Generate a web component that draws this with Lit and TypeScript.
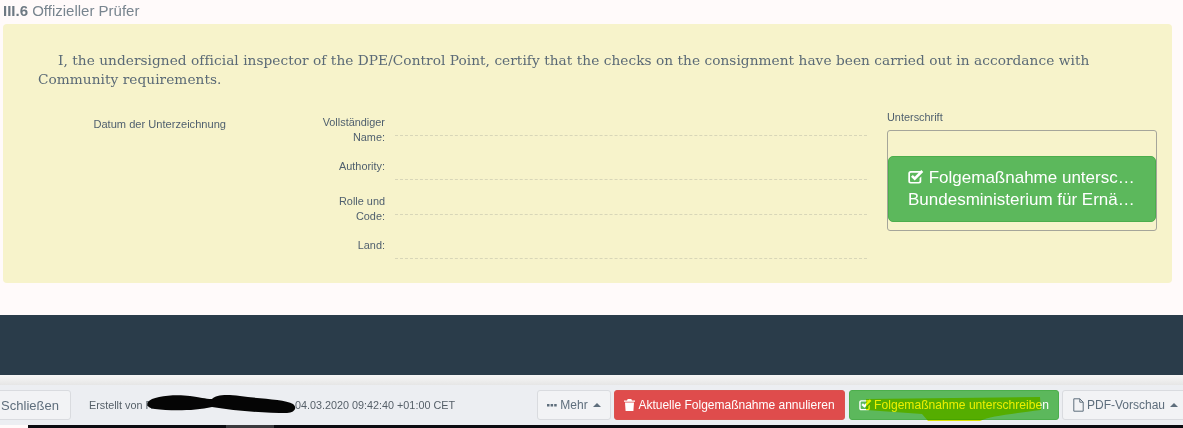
import { LitElement, html, css, svg } from "lit";
import { customElement } from "lit/decorators.js";

const check = svg`<svg class="ic" viewBox="0 0 16 14"><path d="M2.600 1h9.400c.6 0 1.100.1 1.500.3l-1.400 1.500H2.900c-.5 0-.9.4-.9.9v7.300c0 .5.4.9.9.9h7.800c.5 0 .9-.4.9-.9V8.300l1.700-1.700v4.700c0 1.300-1 2.300-2.300 2.300H2.600c-1.300 0-2.300-1-2.300-2.300V3.300C.3 2 1.300 1 2.600 1z" fill="currentColor"/><path d="M3.900 5.900l2.800 2.700L14.300 1" fill="none" stroke="currentColor" stroke-width="2.700"/></svg>`;

@customElement("app-root")
export class AppRoot extends LitElement {
  static styles = css`
    :host { display: block; position: relative; width: 1183px; height: 428px; overflow: hidden; background: #fffafa; font-family: "Liberation Sans", Arial, sans-serif; color: #5a6a78; }
    .title { height: 24px; padding: 3px 0 0 3px; box-sizing: border-box; font-size: 15px; line-height: 16px; color: #78858f; }
    .title b { color: #6d7983; }
    .panel { margin: 0 11px 0 3px; height: 259px; box-sizing: border-box; background: #f7f3cb; border-radius: 4px; padding: 27px 0 0 35px; }
    .cert { margin: 0; width: 1060px; font-family: "DejaVu Serif", Georgia, serif; font-size: 13.7px; line-height: 19px; color: #5b6a76; text-indent: 20px; letter-spacing: 0.05px; }
    .grid { display: flex; margin-top: 28px; font-size: 10.900px; color: #4f5f6e; }
    .date { flex: none; width: 188px; text-align: right; line-height: 14px; font-size: 11.100px; }
    .fields { flex: none; width: 545px; margin-left: 96px; margin-top: -2px; }
    .row { display: flex; height: 35px; align-items: flex-start; }
    .lab { width: 63px; text-align: right; line-height: 15px; }
    .val { flex: 0 0 472px; margin-left: 10px; border-bottom: 1px dashed #d8d6b8; box-sizing: border-box; }
    .name .val { height: 21px; }
    .auth .lab { padding-top: 9px; }
    .auth .val { height: 30px; }
    .role { margin-top: 7px; }
    .role .lab { padding-top: 2px; }
    .role .val { height: 23px; }
    .land .lab { padding-top: 11px; }
    .land .val { height: 32px; }
    .sig { flex: none; margin-left: 20px; width: 270px; margin-top: -7px; }
    .sig-l { line-height: 14px; height: 20px; }
    .box { border: 1px solid #a5a59a; border-radius: 3px; height: 101px; box-sizing: border-box; padding-top: 25px; }
    .sign { width: 268px; height: 66px; box-sizing: border-box; background: #5cb85c; border-radius: 5px; color: #fff; font-size: 17px; line-height: 22px; text-align: center; padding: 10px 19px 0; border: 1px solid #4cae4c; }
    .sign div { white-space: nowrap; overflow: hidden; text-overflow: ellipsis; }
    .sign .ic { width: 16px; height: 14px; vertical-align: -1px; }
    .band { margin-top: 32px; height: 60px; background: #2a3c4a; }
    .bar { height: 50px; box-sizing: border-box; padding-top: 10px; background: linear-gradient(#f6f6f6, #e6e6e6 10px, #eceef2 10px); }
    .tools { height: 40px; display: flex; align-items: center; font-size: 12px; }
    .btn { flex: none; height: 30px; box-sizing: border-box; border-radius: 3px; display: flex; align-items: center; justify-content: center; gap: 3px; font-size: 12px; white-space: nowrap; border: 1px solid #d9dbdf; background: #f2f3f5; color: #5e6e7c; }
    .close { width: 82px; margin-left: -11px; font-size: 13px; }
    .meta { flex: none; width: 466px; padding-left: 18px; box-sizing: border-box; font-size: 10.800px; color: #555f68; white-space: nowrap; display: flex; }
    .meta .by { width: 206px; }
    .more { width: 74px; }
    .danger { width: 231px; margin-left: 3px; background: #df4c4c; border-color: #d9534f; color: #fff; font-size: 12px; }
    .ok { width: 210px; margin-left: 4px; background: #5cb85c; border-color: #4cae4c; color: #fff; font-size: 12.100px; gap: 2px; }
    .ok .ic { width: 13px; height: 12px; }
    .pdf { width: 125px; margin-left: 3px; justify-content: flex-start; padding-left: 10px; }
    .caret { width: 0; height: 0; border: 4px solid transparent; border-top: 0; border-bottom: 4px solid #5e6e7c; margin-left: 2px; }
    .floor { height: 3px; margin-left: 28px; background: #0b0b10; display: flex; padding-left: 198px; }
    .floor i { display: block; width: 48px; height: 3px; background: #3a3a3e; }
    .ink { position: absolute; left: 0; top: 0; pointer-events: none; }
    .ic { flex: none; }
  `;

  render() {
    return html`
      <div class="title"><b>III.6</b> Offizieller Prüfer</div>
      <section class="panel">
        <p class="cert">I, the undersigned official inspector of the DPE/Control Point, certify that the checks on the consignment have been carried out in accordance with Community requirements.</p>
        <div class="grid">
          <div class="date">Datum der Unterzeichnung</div>
          <div class="fields">
            <div class="row name"><div class="lab">Vollständiger Name:</div><div class="val"></div></div>
            <div class="row auth"><div class="lab">Authority:</div><div class="val"></div></div>
            <div class="row role"><div class="lab">Rolle und Code:</div><div class="val"></div></div>
            <div class="row land"><div class="lab">Land:</div><div class="val"></div></div>
          </div>
          <div class="sig">
            <div class="sig-l">Unterschrift</div>
            <div class="box">
              <div class="sign">
                <div>${check} Folgemaßnahme unterschreiben</div>
                <div>Bundesministerium für Ernährung</div>
              </div>
            </div>
          </div>
        </div>
      </section>
      <div class="band"></div>
      <div class="bar">
        <div class="tools">
          <div class="btn close">Schließen</div>
          <div class="meta"><span class="by">Erstellt von R</span><span>04.03.2020 09:42:40 +01:00 CET</span></div>
          <div class="btn more"><svg width="10" height="4" viewBox="0 0 10 4"><g fill="currentColor"><rect x="0" y="1" width="2.500" height="2.500"/><rect x="3.600" y="1" width="2.500" height="2.500"/><rect x="7.200" y="1" width="2.500" height="2.500"/></g></svg>Mehr<i class="caret"></i></div>
          <div class="btn danger"><svg width="11" height="12" viewBox="0 0 11 12"><path fill="currentColor" d="M3.700 0h3.600l.7 1.500h3v1.300H0V1.500h3zM1 3.600h9l-.6 8.400H1.600z"/></svg>Aktuelle Folgemaßnahme annulieren</div>
          <div class="btn ok">${check}<span>Folgemaßnahme unterschreiben</span></div>
          <div class="btn pdf"><svg width="11" height="14" viewBox="0 0 11 14"><path fill="none" stroke="currentColor" d="M.8.800h6l3.400 3.400v9H.8zM6.800.800v3.400h3.400"/></svg>PDF-Vorschau<i class="caret"></i></div>
        </div>
      </div>
      <div class="floor"><i></i></div>
      <svg class="ink" width="1183" height="428" viewBox="0 0 1183 428">
        <path d="M148 402C152 396 175 394 190 396C200 397 205 399 212 399C216 395 225 394 240 396C260 399 285 399 293 404C298 408 294 413 287 413C265 413 235 411 212 407C195 411 170 411 155 409C148 408 146 405 148 402Z" fill="#050505"/>
        <path d="M866 399L1040 397L1041 410C1010 414 990 416 980 421L928 421L922 414L866 410Z" fill="#ecf000" style="mix-blend-mode:multiply"/>
      </svg>
    `;
  }
}
